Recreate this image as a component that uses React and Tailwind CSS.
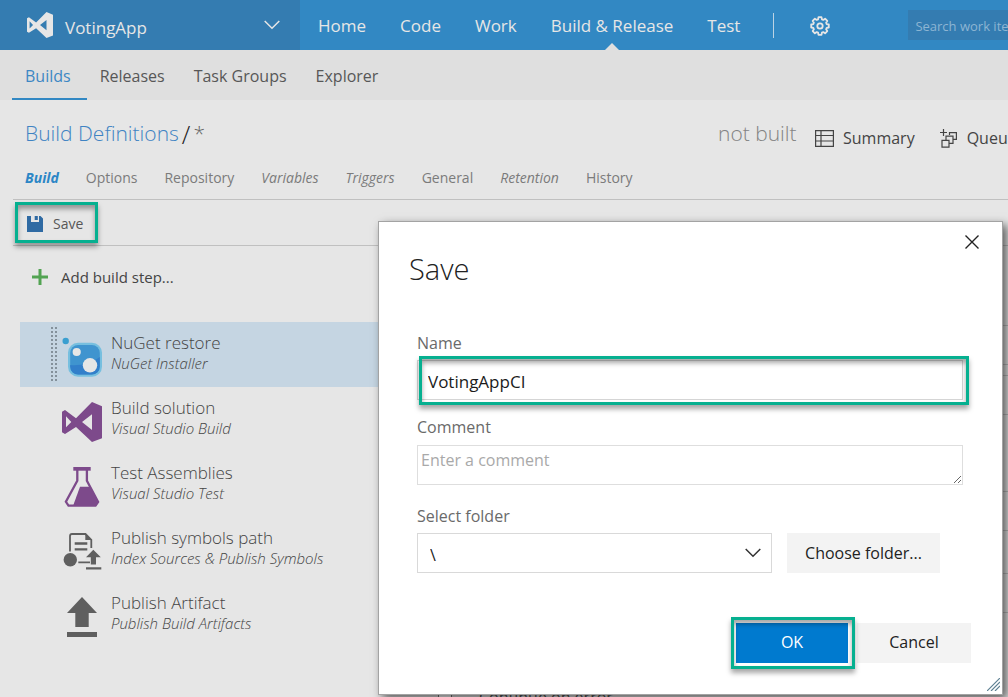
import { useState } from 'react';

const mainNav = ['Home', 'Code', 'Work', 'Build & Release', 'Test'];
const hubNav = ['Builds', 'Releases', 'Task Groups', 'Explorer'];
const tabs = [
  { label: 'Build', style: 'font-bold italic text-[#2c86c6]' },
  { label: 'Options', style: 'text-[#7b7b7b]' },
  { label: 'Repository', style: 'text-[#7b7b7b]' },
  { label: 'Variables', style: 'italic text-[#7b7b7b]' },
  { label: 'Triggers', style: 'italic text-[#7b7b7b]' },
  { label: 'General', style: 'text-[#7b7b7b]' },
  { label: 'Retention', style: 'italic text-[#7b7b7b]' },
  { label: 'History', style: 'text-[#7b7b7b]' },
];

function VisualStudioIcon({ className }) {
  return (
    <svg viewBox="0 0 40 40" className={className} fill="currentColor" fillRule="evenodd" aria-hidden="true">
      <path d="M30 0L40 4.3V36.3L30 40L14 25L3 32L0 30.3V9.7L3 8L14 16.3ZM4 14.3V25.3L9.3 20ZM30 12.3L20 20L30 28Z" />
    </svg>
  );
}

function NuGetIcon() {
  return (
    <svg viewBox="0 0 40 40" className="size-10 overflow-visible" aria-hidden="true">
      <circle cx="3.7" cy="4" r="3.2" fill="#3a9fd0" />
      <rect x="6" y="5.7" width="34" height="34" rx="10" fill="#76bfdf" />
      <rect x="8.2" y="7.9" width="29.6" height="29.6" rx="8" fill="#3f94cf" />
      <path d="M8.2 28C18 29 30 26 37.8 20V29.5a8 8 0 0 1-8 8H16.2a8 8 0 0 1-8-8Z" fill="#327fca" />
      <circle cx="14.7" cy="15" r="4.1" fill="#e6e6e6" />
      <circle cx="28" cy="28.3" r="7.2" fill="#e6e6e6" />
    </svg>
  );
}

function FlaskIcon() {
  return (
    <svg viewBox="0 0 40 40" className="size-10 text-[#7d4a8b]" aria-hidden="true">
      <path d="M11.3 0H28.7V3.7H11.3Z" fill="currentColor" />
      <path d="M15.3 3V13.7L3.9 34.8L6.5 38.6H33.5L36.1 34.8L24.9 13.7V3" fill="none" stroke="currentColor" strokeWidth="2.3" />
      <path d="M18 19.7H28L36.5 35L34 39H11Z" fill="currentColor" />
    </svg>
  );
}

function SymbolsIcon() {
  return (
    <svg viewBox="0 0 40 40" className="size-10 text-[#5f5f5f]" aria-hidden="true">
      <path d="M8 19.5V4Q8 2 10 2H23.5L29.3 7.8V16M16.3 30.3H28" fill="none" stroke="currentColor" strokeWidth="1.8" />
      <path d="M23.3 2V8H29.6Z" fill="currentColor" />
      <path d="M12.7 11.5H25.3M12.7 17.4H25.3M24 36.4H39.3" stroke="currentColor" strokeWidth="2.3" />
      <circle cx="8.3" cy="27.7" r="6.7" fill="currentColor" />
      <path d="M31.3 17.7L38.8 25.3H34V32.5H28.8V25.3H24Z" fill="currentColor" />
    </svg>
  );
}

function UploadIcon() {
  return (
    <svg viewBox="0 0 40 40" className="size-10 text-[#5f5f5f]" fill="currentColor" aria-hidden="true">
      <path d="M20 0L35 16H26.7V30H13.3V16H5ZM5 35H35V40H5Z" />
    </svg>
  );
}

function GearIcon() {
  return (
    <svg viewBox="0 0 20 20" className="size-5" fill="none" stroke="currentColor" strokeWidth="1.8" strokeLinejoin="round" aria-hidden="true">
      <path d="M8.5 1.2h3l.4 2.1 1.4.6 1.8-1.2 2.2 2.2-1.2 1.8.6 1.4 2.1.4v3l-2.1.4-.6 1.4 1.2 1.8-2.2 2.2-1.8-1.2-1.4.6-.4 2.1h-3l-.4-2.1-1.4-.6-1.8 1.2-2.2-2.2 1.2-1.8-.6-1.4-2.1-.4v-3l2.1-.4.6-1.4-1.2-1.8 2.2-2.2 1.8 1.2 1.4-.6z" />
      <circle cx="10" cy="10" r="2.7" />
    </svg>
  );
}

function Chevron({ className }) {
  return (
    <svg viewBox="0 0 16 10" className={className} fill="none" stroke="currentColor" strokeWidth="1.5" aria-hidden="true">
      <path d="M.7 1L8 8.3L15.3 1" />
    </svg>
  );
}

function SaveIcon() {
  return (
    <svg viewBox="0 0 16 16" className="size-4 text-[#2f6aa3]" aria-hidden="true">
      <path d="M0 0H4V6H12V0H13.5L16 2.5V16H0ZM7.7 0H10.8V4H7.7Z" fill="currentColor" />
    </svg>
  );
}

function TableIcon() {
  return (
    <svg viewBox="0 0 19 17" className="h-[17px] w-[19px]" fill="none" stroke="currentColor" strokeWidth="1.2" aria-hidden="true">
      <path d="M.6.6H18.4V16.4H.6ZM.6 5.5H18.4M.6 11H18.4M6 .6V16.4" />
    </svg>
  );
}

function QueueIcon() {
  return (
    <svg viewBox="0 0 18 19" className="h-[19px] w-[18px]" fill="none" stroke="currentColor" strokeWidth="1.2" aria-hidden="true">
      <path d="M3.5 0V7M0 3.5H7M9.5 6V3.6H16.4V10.4H13.2M6 11V7.2H13V14.4H9.4M2 11.4H9V18.2H2Z" />
    </svg>
  );
}

function DragHandle() {
  return (
    <svg viewBox="0 0 6 56" className="h-14 w-1.5" aria-hidden="true">
      <path d="M1 0V56M5 0V56" stroke="#84919b" strokeWidth="2" strokeDasharray="2 2" />
    </svg>
  );
}

const steps = [
  { title: 'NuGet restore', task: 'NuGet Installer', icon: <NuGetIcon />, selected: true },
  { title: 'Build solution', task: 'Visual Studio Build', icon: <VisualStudioIcon className="size-10 text-[#7d4a8b]" /> },
  { title: 'Test Assemblies', task: 'Visual Studio Test', icon: <FlaskIcon /> },
  { title: 'Publish symbols path', task: 'Index Sources & Publish Symbols', icon: <SymbolsIcon /> },
  { title: 'Publish Artifact', task: 'Publish Build Artifacts', icon: <UploadIcon /> },
];

function Highlight({ className }) {
  return (
    <span
      className={`pointer-events-none absolute border-3 border-[#06b090] shadow-[0_4px_5px_rgba(0,0,0,0.35),inset_0_4px_5px_rgba(0,0,0,0.35)] ${className}`}
    />
  );
}

function Header() {
  return (
    <header className="flex h-[50px] shrink-0 bg-[#3288c3] text-[17px] text-[#e6e6e6]">
      <button className="flex w-[300px] shrink-0 items-center bg-[#347cb1] pl-[27px] pr-5">
        <VisualStudioIcon className="size-[26px]" />
        <span className="ml-3 mr-auto pt-1.5">VotingApp</span>
        <Chevron className="h-2.5 w-4" />
      </button>
      <nav className="flex shrink-0 gap-[34px] pl-[18px]">
        {mainNav.map((item) => (
          <a key={item} href="#" className="relative flex items-center whitespace-nowrap pt-0.5">
            {item}
            {item === 'Build & Release' && (
              <svg viewBox="0 0 14 7" className="absolute bottom-0 left-1/2 h-[7px] w-3.5 -translate-x-1/2" aria-hidden="true">
                <path d="M0 7L7 0L14 7Z" fill="#dfdfdf" />
              </svg>
            )}
          </a>
        ))}
      </nav>
      <div className="ml-[33px] h-[25px] w-px shrink-0 self-center bg-[#bcd3e4]" />
      <button aria-label="Settings" className="ml-9 shrink-0 pt-0.5">
        <GearIcon />
      </button>
      <input
        aria-label="Search work items"
        placeholder="Search work items"
        className="ml-[78px] h-[30px] w-[200px] shrink-0 self-center bg-[#347cb1] px-[7px] pt-0.5 text-[13px] placeholder:text-[#8db5d3]"
      />
    </header>
  );
}

function SaveDialog() {
  const [name, setName] = useState('VotingAppCI');
  return (
    <section
      role="dialog"
      aria-labelledby="dialog-title"
      className="absolute right-[5px] top-[221px] w-[625px] border border-[#a3a3a3] bg-white pb-[31px] pl-[38px] pr-[39px] pt-[29px] text-[16px] leading-6 text-[#6a6a6a] shadow-[4px_4px_9px_rgba(0,0,0,0.6)]"
    >
      <button aria-label="Close" className="absolute right-[23px] top-[13px] text-[#222]">
        <svg viewBox="0 0 14 14" className="size-3.5" fill="none" stroke="currentColor" strokeWidth="1.4" aria-hidden="true">
          <path d="M.5.5L13.5 13.5M13.5.5L.5 13.5" />
        </svg>
      </button>
      <h2 id="dialog-title" className="-ml-2 text-[29px] font-light leading-9 text-[#222]">Save</h2>
      <form onSubmit={(e) => e.preventDefault()}>
        <label htmlFor="name" className="mt-11 block">Name</label>
        <div className="relative mt-[5px]">
          <input
            id="name"
            value={name}
            onChange={(e) => setName(e.target.value)}
            className="block h-10 w-full border border-[#d5d5d5] px-2.5 pt-0.5 text-[17px] text-[#1b1b1b] outline-none"
          />
          <Highlight className="-bottom-[5px] -right-1.5 -top-1 left-0.5" />
        </div>
        <label htmlFor="comment" className="mt-[15px] block">Comment</label>
        <textarea
          id="comment"
          placeholder="Enter a comment"
          className="mt-[6px] block h-10 w-full border border-[#dedede] px-[3px] py-0.5 placeholder:text-[#a9a9a9]"
        />
        <label htmlFor="folder" className="mt-[19px] block">Select folder</label>
        <div className="mt-[5px] flex gap-[15px]">
          <div className="relative w-[355px]">
            <select id="folder" className="h-10 w-full appearance-none border border-[#d9d9d9] bg-white px-3 pt-1 text-[#1b1b1b]">
              <option>\</option>
            </select>
            <Chevron className="pointer-events-none absolute right-[11px] top-[15px] h-2.5 w-4 text-[#333]" />
          </div>
          <button type="button" className="h-10 w-[153px] bg-[#f3f3f3] text-[#222]">Choose folder...</button>
        </div>
        <div className="-mr-2 mt-[50px] flex justify-end gap-[9px]">
          <div className="relative">
            <button type="submit" className="block h-10 w-28 bg-[#007acf] pb-0.5 text-white">OK</button>
            <Highlight className="-inset-y-1.5 -left-[5px] -right-[7px]" />
          </div>
          <button type="button" className="h-10 w-[114px] bg-[#f3f3f3] pb-0.5 text-[#222]">Cancel</button>
        </div>
      </form>
      <svg viewBox="0 0 13 13" className="absolute bottom-[3px] right-0.5 size-[13px]" stroke="#5e8193" strokeWidth="1.2" aria-hidden="true">
        <path d="M0 13L13 0M4 13L13 4M8 13L13 8" />
      </svg>
    </section>
  );
}

export default function App() {
  return (
    <div className="relative flex h-screen flex-col overflow-hidden bg-[#e6e6e6] font-['Open_Sans','Noto_Sans',sans-serif] text-[#444]">
      <Header />
      <nav className="flex h-[50px] shrink-0 bg-[#dfdfdf] pl-3 text-[16px] text-[#575757]">
        {hubNav.map((item) => (
          <a
            key={item}
            href="#"
            className={`flex items-center border-b-2 pl-[13px] pr-4 pt-1 ${
              item === 'Builds' ? 'border-[#3288c3] text-[#3d87c4]' : 'border-transparent'
            }`}
          >
            {item}
          </a>
        ))}
      </nav>
      <main className="flex grow flex-col pl-[13px]">
        <div className="flex h-[60px] shrink-0 items-center whitespace-nowrap pb-1 pt-3 text-[21px] font-light">
          <h1 className="flex w-[705px] shrink-0 items-center pl-3">
            <a href="#" className="text-[#3f83c3]">Build Definitions</a>
            <span className="px-[3px] text-[25px] leading-7 text-[#222]">/</span>
            <span className="text-[#666]">*</span>
          </h1>
          <span className="w-[97px] shrink-0 text-[#838383]">not built</span>
          <button className="mt-2 flex shrink-0 items-center gap-[9px] text-[16px] font-normal">
            <TableIcon />
            Summary
          </button>
          <button className="ml-[25px] mt-2 flex shrink-0 items-center gap-[9px] text-[16px] font-normal">
            <QueueIcon />
            Queue
          </button>
        </div>
        <nav className="flex h-10 shrink-0 items-center gap-[27px] border-b border-[#c0c0c0] pb-1 pl-3 text-[14px]">
          {tabs.map((tab) => (
            <a key={tab.label} href="#" className={tab.style}>
              {tab.label}
            </a>
          ))}
        </nav>
        <div className="flex h-[46px] shrink-0 border-b border-[#c0c0c0] pl-0.5 pt-0.5">
          <button className="relative flex h-[41px] w-[83px] items-center gap-2.5 pl-3 pt-0.5 text-[14px] text-[#575757]">
            <SaveIcon />
            Save
            <Highlight className="inset-0" />
          </button>
        </div>
        <div className="flex grow">
          <section className="w-[380px] shrink-0 pl-[7px]">
            <button className="ml-3 flex h-16 items-center gap-[13px] pb-0.5 text-[15px]">
              <svg viewBox="0 0 16 16" className="size-4" stroke="#52a352" strokeWidth="3" aria-hidden="true">
                <path d="M8 0V16M0 8H16" />
              </svg>
              Add build step...
            </button>
            <ul className="mt-3">
              {steps.map((step) => (
                <li key={step.title} className={`flex h-[65px] ${step.selected ? 'bg-[#c5d5e2]' : ''}`}>
                  <div className="flex w-[42px] shrink-0 items-center justify-end pr-[5px]">
                    {step.selected && <DragHandle />}
                  </div>
                  <div className="pt-[15px]">{step.icon}</div>
                  <div className="whitespace-nowrap pl-[9px] pt-[11px] leading-5">
                    <div className="text-[17px] font-light">{step.title}</div>
                    <div className="text-[15px] font-light italic">{step.task}</div>
                  </div>
                </li>
              ))}
            </ul>
          </section>
          <section className="flex h-[451px] grow flex-col overflow-hidden pt-[79px] text-[16px]">
            <div className="h-10 shrink-0 border-y border-[#c0c0c0]" />
            <div className="mt-2.5 h-10 shrink-0 border-y border-[#c0c0c0]" />
            <div className="mt-[76px] h-10 shrink-0 border-y border-[#c0c0c0]" />
            <div className="mt-[42px] h-10 shrink-0 border-y border-[#c0c0c0]" />
            <label className="ml-[45px] mt-[72px] flex shrink-0 items-center gap-[27px] text-[#555]">
              <input type="checkbox" className="size-3.5" />
              Continue on error
            </label>
          </section>
        </div>
      </main>
      <SaveDialog />
    </div>
  );
}
